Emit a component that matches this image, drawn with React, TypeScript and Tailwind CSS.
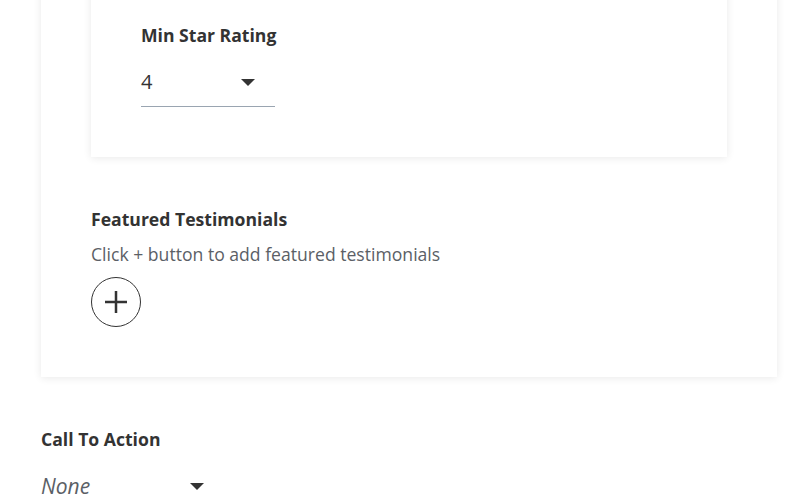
import React from "react";

function Caret() {
  return <span className="block h-0 w-0 border-x-[7px] border-t-[7px] border-x-transparent border-t-[#333333]" />;
}

export default function App() {
  return (
    <div className="min-h-[498px] w-[806px] overflow-hidden bg-white text-[#333333]" style={{ fontFamily: '"Open Sans", sans-serif' }}>
      <div className="-mt-[77px] ml-[41px] w-[736px] bg-white px-[50px] pb-[50px] pt-[50px] shadow-[0_1px_8px_rgba(0,0,0,0.09)]">
        <div className="bg-white px-[50px] pb-[50px] pt-[50px] shadow-[0_1px_8px_rgba(0,0,0,0.09)]">
          <div className="text-[17.6px] font-bold leading-[24px]">Min Star Rating</div>
          <div className="mt-[19px] flex h-[41px] w-[134px] items-center justify-between border-b border-[#9aa5b1] pb-[8px] pr-[20px]">
            <span className="text-[20px] leading-[24px]">4</span>
            <Caret />
          </div>
        </div>
        <div className="mt-[50px] text-[17.6px] font-bold leading-[24px]">Featured Testimonials</div>
        <div className="mt-[11px] text-[17.6px] leading-[24px] text-[#5b6066]">Click + button to add featured testimonials</div>
        <button className="mt-[11px] flex h-[50px] w-[50px] items-center justify-center rounded-full border border-[#333333] bg-white">
          <svg width="22" height="22" viewBox="0 0 22 22">
            <path d="M11 0v22M0 11h22" stroke="#333333" strokeWidth="2.5" />
          </svg>
        </button>
      </div>
      <div className="ml-[41px] mt-[50px] text-[17.6px] font-bold leading-[24px]">Call To Action</div>
      <div className="ml-[41px] mt-[23px] flex w-[170px] items-center justify-between pr-[7px]">
        <span className="text-[21px] italic leading-[24px] text-[#5b6066]">None</span>
        <Caret />
      </div>
    </div>
  );
}
